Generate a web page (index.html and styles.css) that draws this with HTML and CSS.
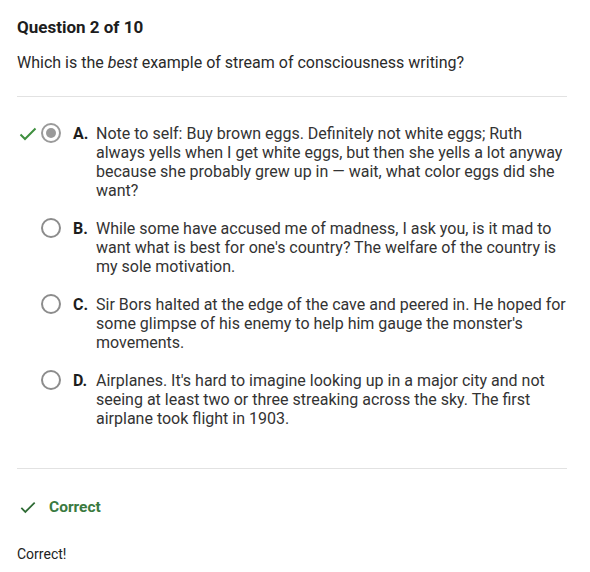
FILE: index.html
```html
<!DOCTYPE html>
<html>
<head>
<meta charset="utf-8">
<link rel="stylesheet" href="styles.css">
</head>
<body>
<div class="page">
  <h1 class="title">Question 2 of 10</h1>
  <p class="prompt">Which is the <em>best</em> example of stream of consciousness writing?</p>
  <hr class="rule">
  <ul class="options">
    <li class="option">
      <span class="mark">
        <svg viewBox="0 0 18 14" width="18" height="14"><path d="M1.5 7.5 L6 12 L16.5 1.5" fill="none" stroke="#3f8f3f" stroke-width="2"/></svg>
      </span>
      <span class="radio selected"><span class="dot"></span></span>
      <span class="letter">A.</span>
      <span class="text">Note to self: Buy brown eggs. Definitely not white eggs; Ruth always yells when I get white eggs, but then she yells a lot anyway because she probably grew up in — wait, what color eggs did she want?</span>
    </li>
    <li class="option">
      <span class="mark"></span>
      <span class="radio"></span>
      <span class="letter">B.</span>
      <span class="text">While some have accused me of madness, I ask you, is it mad to want what is best for one's country? The welfare of the country is my sole motivation.</span>
    </li>
    <li class="option">
      <span class="mark"></span>
      <span class="radio"></span>
      <span class="letter">C.</span>
      <span class="text">Sir Bors halted at the edge of the cave and peered in. He hoped for some glimpse of his enemy to help him gauge the monster's movements.</span>
    </li>
    <li class="option">
      <span class="mark"></span>
      <span class="radio"></span>
      <span class="letter">D.</span>
      <span class="text">Airplanes. It's hard to imagine looking up in a major city and not seeing at least two or three streaking across the sky. The first airplane took flight in 1903.</span>
    </li>
  </ul>
  <hr class="rule rule-bottom">
  <div class="result">
    <svg viewBox="0 0 18 14" width="16" height="13"><path d="M1.5 7.5 L6 12 L16.5 1.5" fill="none" stroke="#2f6b35" stroke-width="2"/></svg>
    <span class="result-label">Correct</span>
  </div>
  <p class="feedback">Correct!</p>
</div>
</body>
</html>
```

FILE: styles.css
```css
html, body {
  margin: 0;
  padding: 0;
  background: #ffffff;
}
body {
  font-family: Roboto, "Liberation Sans", sans-serif;
  color: #222222;
}
.page {
  padding: 0 23px 0 17px;
}
.title {
  margin: 0;
  padding-top: 16px;
  font-size: 17px;
  font-weight: 700;
  line-height: 22px;
  color: #1d1d1d;
}
.prompt {
  margin: 15px 0 0;
  font-size: 16px;
  line-height: 20px;
  color: #2a2a2a;
}
.rule {
  border: 0;
  border-top: 1px solid #e2e2e2;
  margin: 23px 0 0;
}
.options {
  list-style: none;
  margin: 27px -3px 0 0;
  padding: 0;
  display: flex;
  flex-direction: column;
  gap: 19px;
}
.option {
  display: flex;
  align-items: flex-start;
  font-size: 16px;
  line-height: 19px;
  color: #333333;
}
.mark {
  width: 24px;
  flex: none;
  padding-top: 3px;
  display: flex;
  justify-content: flex-start;
}
.mark svg { display: block; margin-left: 2px; }
.radio {
  width: 20px;
  height: 20px;
  box-sizing: border-box;
  border: 2px solid #8c8c8c;
  border-radius: 50%;
  flex: none;
  margin-top: -1px;
  display: flex;
  align-items: center;
  justify-content: center;
}
.radio.selected { border-color: #9a9a9a; }
.dot {
  width: 10px;
  height: 10px;
  border-radius: 50%;
  background: #9a9a9a;
}
.letter {
  width: 23px;
  flex: none;
  margin-left: 12px;
  font-weight: 700;
  color: #1d1d1d;
}
.text {
  flex: 1;
}
.rule-bottom {
  margin-top: 40px;
}
.result {
  display: flex;
  align-items: center;
  gap: 13px;
  margin-top: 28px;
  padding-left: 3px;
}
.result svg { display: block; }
.result-label {
  font-size: 15.5px;
  font-weight: 700;
  line-height: 20px;
  color: #3a7a3f;
}
.feedback {
  margin: 28px 0 0;
  font-size: 14px;
  line-height: 18px;
  color: #222222;
}
```
